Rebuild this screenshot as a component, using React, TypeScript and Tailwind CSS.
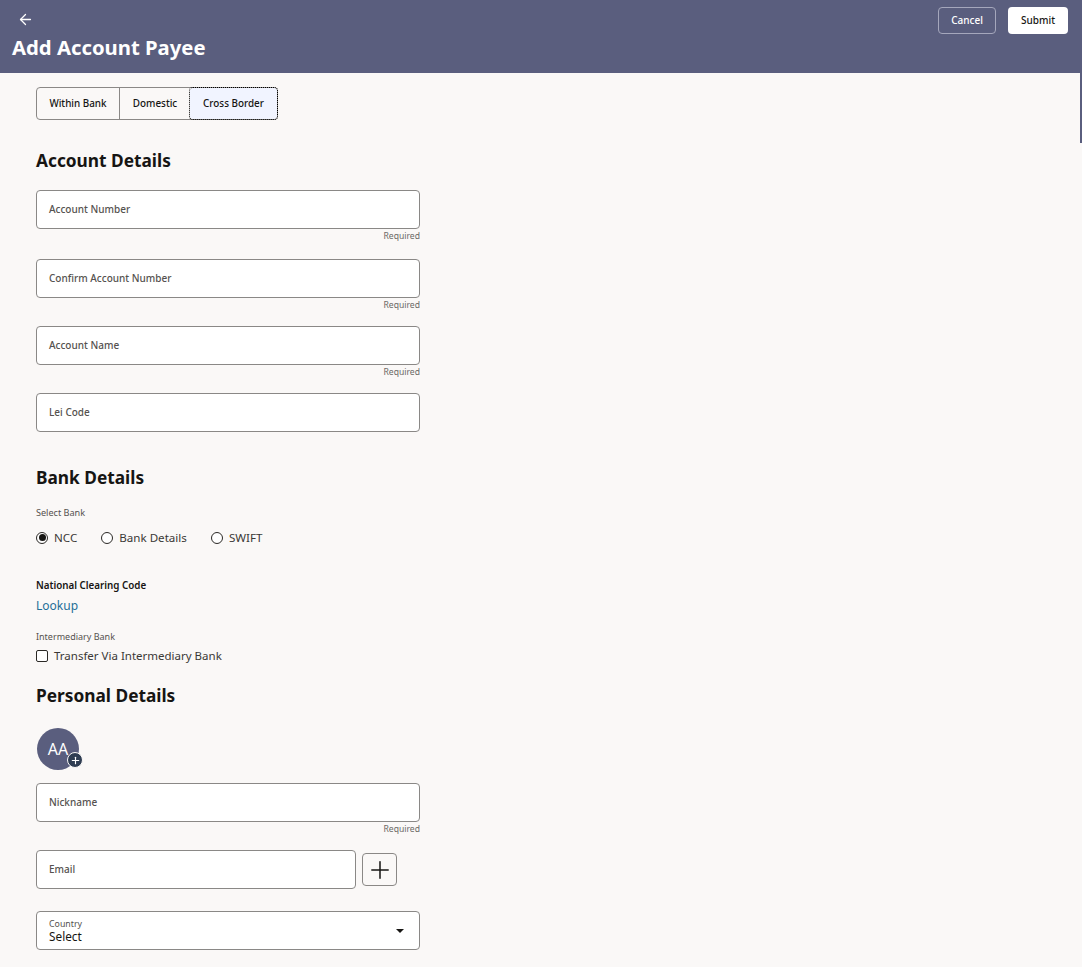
import { ArrowLeft, Plus } from 'lucide-react'

const font = { fontFamily: '"Noto Sans", "Open Sans", sans-serif' }

function Field({ label, required, className }: { label: string; required?: boolean; className?: string }) {
  return (
    <div className={className ?? 'w-[384px]'}>
      <div className="h-[39px] rounded-[4px] border border-[#8a8886] bg-white px-3 flex items-center">
        <span className="text-[10px] font-medium text-[#55524f]">{label}</span>
      </div>
      {required && <div className="h-[16px] text-right text-[8.6px] leading-[15px] text-[#6b6865]">Required</div>}
    </div>
  )
}

function Radio({ label, checked }: { label: string; checked?: boolean }) {
  return (
    <div className="flex items-center gap-[6px]">
      <span className="flex h-[12px] w-[12px] items-center justify-center rounded-full border border-[#2b2926] bg-white">
        {checked && <span className="h-[7px] w-[7px] rounded-full bg-[#161513]" />}
      </span>
      <span className="text-[11.6px] text-[#3a3836]">{label}</span>
    </div>
  )
}

function Heading({ children, className }: { children: string; className: string }) {
  return <h2 className={`text-[17.3px] font-bold leading-[24px] text-[#161513] ${className}`}>{children}</h2>
}

export default function App() {
  return (
    <div style={font} className="relative h-[967px] overflow-hidden bg-[#faf8f7]">
      <header className="flex h-[73px] justify-between bg-[#5a5e7e] pl-3 pr-[14px] pt-[7px]">
        <div>
          <ArrowLeft className="ml-[5px] mt-[4px] h-[17px] w-[17px] text-white" strokeWidth={1.8} />
          <h1 className="mt-[5px] text-[20.3px] font-bold leading-[28px] text-white">Add Account Payee</h1>
        </div>
        <div className="flex items-start gap-3">
          <button className="h-[27px] w-[58px] rounded-[4px] border border-[#a5a7bc] text-[10px] font-medium text-white">Cancel</button>
          <button className="h-[27px] w-[60px] rounded-[4px] bg-white text-[10px] font-medium text-[#161513]">Submit</button>
        </div>
      </header>

      <main className="pl-9 pt-[14px]">
        <div className="flex h-[33px] w-[242px] rounded-[4px] border border-[#8a8886] text-[9.9px] font-medium text-[#161513]">
          <div className="flex w-[83px] items-center justify-center border-r border-[#8a8886]">Within Bank</div>
          <div className="flex w-[70px] items-center justify-center">Domestic</div>
          <div className="flex flex-1 items-center justify-center rounded-[3px] bg-[#f1f4ff] outline-1 outline-dotted outline-black">Cross Border</div>
        </div>

        <Heading className="mt-[29px]">Account Details</Heading>
        <div className="mt-[17px]">
          <Field label="Account Number" required />
          <Field label="Confirm Account Number" required className="mt-[14px] w-[384px]" />
          <Field label="Account Name" required className="mt-[12px] w-[384px]" />
          <Field label="Lei Code" className="mt-[12px] w-[384px]" />
        </div>

        <Heading className="mt-[34px]">Bank Details</Heading>
        <div className="mt-[16px] text-[9.1px] leading-[14px] text-[#55524f]">Select Bank</div>
        <div className="mt-[9px] flex h-[18px] items-center gap-[24px]">
          <Radio label="NCC" checked />
          <Radio label="Bank Details" />
          <Radio label="SWIFT" />
        </div>
        <div className="mt-[31px] text-[9.8px] font-semibold leading-[16px] text-[#161513]">National Clearing Code</div>
        <div className="mt-[3px] text-[12px] leading-[18px] text-[#1f6f97]">Lookup</div>
        <div className="mt-[15px] text-[9px] leading-[14px] text-[#55524f]">Intermediary Bank</div>
        <div className="mt-[3px] flex h-[18px] items-center gap-[6px]">
          <span className="h-[12px] w-[12px] rounded-[2px] border border-[#2b2926] bg-white" />
          <span className="text-[11.5px] text-[#3a3836]">Transfer Via Intermediary Bank</span>
        </div>

        <Heading className="mt-[19px]">Personal Details</Heading>
        <div className="relative ml-px mt-[20px] flex h-[42px] w-[42px] items-center justify-center rounded-full bg-[#5a5e7e] text-[16px] text-white">
          AA
          <span className="absolute bottom-[2px] -right-[4px] flex h-[16px] w-[16px] items-center justify-center rounded-full border border-[#faf8f7] bg-[#2f3d52]">
            <Plus className="h-[11px] w-[11px] text-white" strokeWidth={2.5} />
          </span>
        </div>
        <Field label="Nickname" required className="mt-[13px] w-[384px]" />
        <div className="mt-[12px] flex items-center gap-[6px]">
          <Field label="Email" className="w-[320px]" />
          <button className="flex h-[33px] w-[35px] items-center justify-center rounded-[4px] border border-[#8a8886]">
            <Plus className="h-[28px] w-[28px] text-[#161513]" strokeWidth={1.3} />
          </button>
        </div>
        <div className="mt-[22px] flex h-[39px] w-[384px] items-center justify-between rounded-[4px] border border-[#8a8886] bg-white pl-3 pr-[15px]">
          <div className="pt-[2px]">
            <div className="text-[8.8px] leading-[10px] text-[#55524f]">Country</div>
            <div className="text-[11.8px] leading-[15px] text-[#161513]">Select</div>
          </div>
          <span className="h-0 w-0 border-x-[4px] border-t-[4px] border-x-transparent border-t-[#161513]" />
        </div>
      </main>

      <div className="absolute right-0 top-[73px] h-[70px] w-[2px] bg-[#5a5e7e]" />
    </div>
  )
}
